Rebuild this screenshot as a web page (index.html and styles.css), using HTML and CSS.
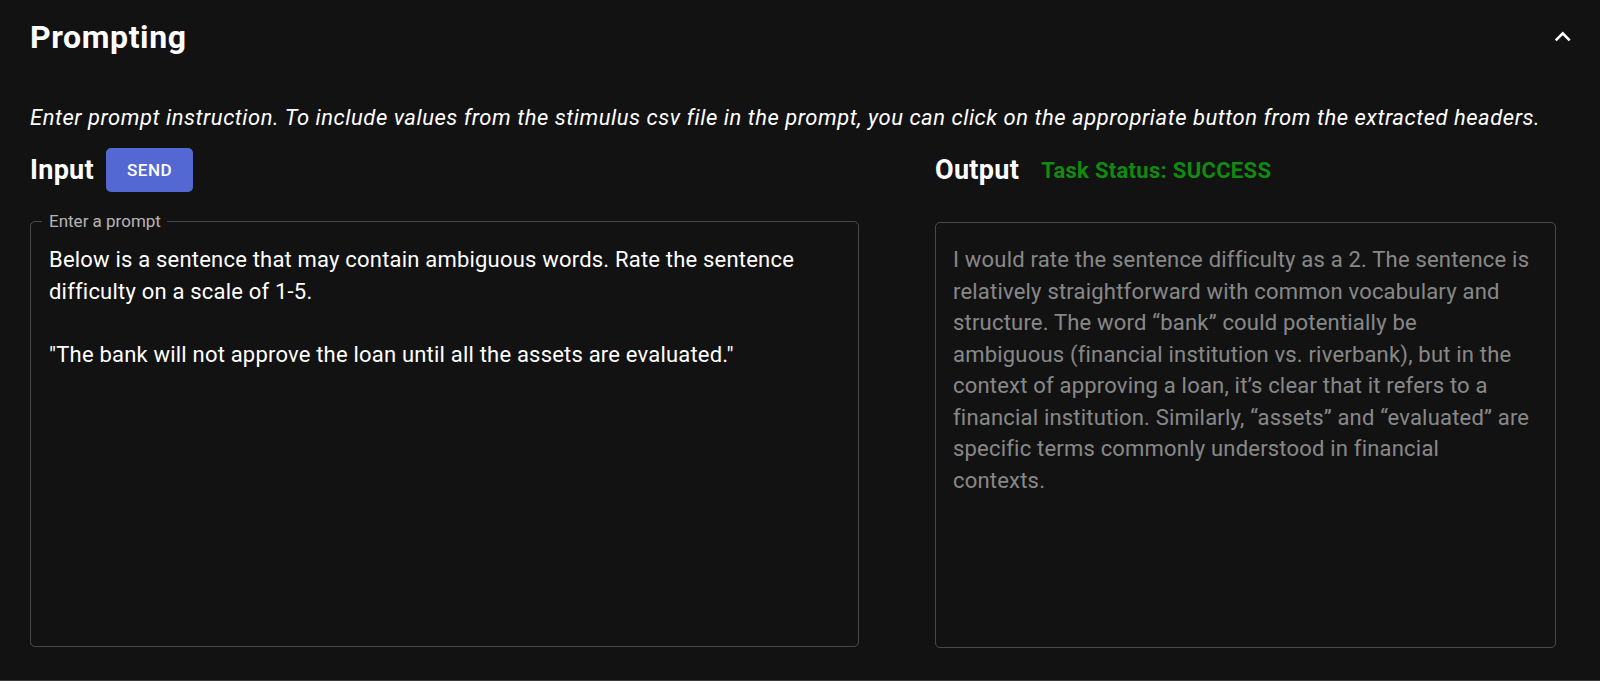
FILE: index.html
```html
<!DOCTYPE html>
<html lang="en">
<head>
<meta charset="utf-8">
<title>Prompting</title>
<link rel="stylesheet" href="styles.css">
</head>
<body>
<section class="panel">
  <header class="panel-head">
    <h1 class="panel-title">Prompting</h1>
    <svg class="chevron" viewBox="0 0 24 24" aria-hidden="true"><path d="M12 8l-6 6 1.41 1.41L12 10.83l4.59 4.58L18 14z"/></svg>
  </header>
  <p class="hint">Enter prompt instruction. To include values from the stimulus csv file in the prompt, you can click on the appropriate button from the extracted headers.</p>
  <div class="columns">
    <div class="col">
      <div class="col-head">
        <h2 class="col-title">Input</h2>
        <button class="send" type="button">Send</button>
      </div>
      <fieldset class="field">
        <legend class="field-label">Enter a prompt</legend>
        <div class="field-text">Below is a sentence that may contain ambiguous words. Rate the sentence difficulty on a scale of 1-5.<br><br>"The bank will not approve the loan until all the assets are evaluated."</div>
      </fieldset>
    </div>
    <div class="col">
      <div class="col-head">
        <h2 class="col-title">Output</h2>
        <span class="status">Task Status: SUCCESS</span>
      </div>
      <div class="output">I would rate the sentence difficulty as a 2. The sentence is<br>relatively straightforward with common vocabulary and<br>structure. The word “bank” could potentially be<br>ambiguous (financial institution vs. riverbank), but in the<br>context of approving a loan, it’s clear that it refers to a<br>financial institution. Similarly, “assets” and “evaluated” are<br>specific terms commonly understood in financial<br>contexts.</div>
    </div>
  </div>
</section>
</body>
</html>
```

FILE: styles.css
```css
html, body {
  margin: 0;
  padding: 0;
  background: #121212;
}

body {
  font-family: Roboto, "Noto Sans", "Liberation Sans", sans-serif;
  color: #ffffff;
}

.panel {
  box-sizing: border-box;
  height: 681px;
  padding: 16px 21.5px 0 30px;
  border-bottom: 1px solid #3a3a3a;
}

.panel-head {
  display: flex;
  justify-content: space-between;
  align-items: center;
  height: 42px;
}

.panel-title {
  margin: 0;
  font-size: 32px;
  font-weight: 700;
  letter-spacing: 0.6px;
  line-height: 42px;
}

.chevron {
  width: 31.5px;
  height: 31.5px;
  fill: #ffffff;
}

.hint {
  margin: 44px 0 0;
  font-style: italic;
  font-size: 22px;
  letter-spacing: 0.53px;
  line-height: 31.5px;
  white-space: nowrap;
}

.columns {
  display: grid;
  grid-template-columns: 829px 621px;
  column-gap: 76px;
  margin-top: 14.5px;
}

.col-head {
  display: flex;
  align-items: center;
  height: 44px;
}

.col-title {
  margin: 0;
  font-size: 27px;
  font-weight: 700;
  letter-spacing: 0.3px;
  line-height: 42px;
}

.send {
  margin-left: 12px;
  height: 44px;
  padding: 0 21px;
  border: none;
  border-radius: 5px;
  background: #5468d4;
  color: #ffffff;
  font-family: Roboto, "Noto Sans", sans-serif;
  font-weight: 500;
  font-size: 17px;
  letter-spacing: 0.5px;
  text-transform: uppercase;
}

.status {
  margin-left: 22px;
  color: #118a11;
  font-weight: 700;
  font-size: 22px;
  letter-spacing: 0.3px;
}

.field {
  box-sizing: border-box;
  height: 434px;
  margin: 21px 0 0;
  padding: 0 11px;
  min-width: 0;
  border: 1px solid rgba(255, 255, 255, 0.23);
  border-radius: 5px;
}

.field-label {
  padding: 0 6px 0 7px;
  font-size: 17px;
  line-height: 17px;
  color: rgba(255, 255, 255, 0.7);
}

.field-text {
  padding: 14px 7px 0;
  font-size: 22px;
  letter-spacing: 0.2px;
  line-height: 31.5px;
  color: #ffffff;
}

.output {
  box-sizing: border-box;
  height: 426px;
  margin-top: 29.5px;
  padding: 21.5px 10px 0 17px;
  border: 1px solid rgba(255, 255, 255, 0.23);
  border-radius: 5px;
  font-size: 22px;
  letter-spacing: 0.2px;
  line-height: 31.5px;
  color: rgba(255, 255, 255, 0.5);
}
```
